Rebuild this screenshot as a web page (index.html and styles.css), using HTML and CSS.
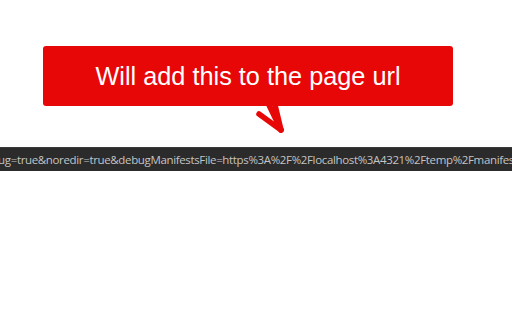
FILE: index.html
```html
<!DOCTYPE html>
<html lang="en">
<head>
  <meta charset="UTF-8">
  <meta name="viewport" content="width=device-width, initial-scale=1.0">
  <title>Debug URL</title>
  <link rel="stylesheet" href="styles.css">
</head>
<body>
  <div class="aviso">
    <div class="balao">Will add this to the page url</div>
    <svg class="seta" width="36" height="32" viewBox="0 0 36 32">
      <g stroke="#e80707" stroke-width="5.5" stroke-linecap="round" fill="none">
        <line x1="17" y1="1" x2="29" y2="26"/>
        <line x1="23" y1="1" x2="29" y2="26"/>
        <line x1="7" y1="10" x2="29" y2="26"/>
      </g>
    </svg>
  </div>

  <div class="barra">
    <span class="url">?debug=true&amp;noredir=true&amp;debugManifestsFile=https%3A%2F%2Flocalhost%3A4321%2Ftemp%2Fmanifest.js</span>
  </div>
</body>
</html>
```

FILE: styles.css
```css
body {
  margin: 0;
  background-color: #fff;
  font-family: "Liberation Sans", Arial, sans-serif;
}
.aviso {
  padding: 46px 0 0 43px;
  height: 147px;
  box-sizing: border-box;
}
.balao {
  width: 410px;
  height: 60px;
  background-color: #e80707;
  color: #fff;
  border-radius: 3px;
  font-size: 25.3px;
  display: flex;
  align-items: center;
  justify-content: center;
}
.seta {
  display: block;
  margin-left: 209px;
  margin-top: -2px;
}
.barra {
  height: 24px;
  background-color: #2b2b2b;
  border-top: 1px solid #3a3a3a;
  box-sizing: border-box;
  overflow: hidden;
  white-space: nowrap;
  display: flex;
  align-items: center;
}
.url {
  color: #c4c4c4;
  font-family: "Open Sans", sans-serif;
  font-size: 11.5px;
  letter-spacing: -0.35px;
  margin-left: -26px;
}
```
